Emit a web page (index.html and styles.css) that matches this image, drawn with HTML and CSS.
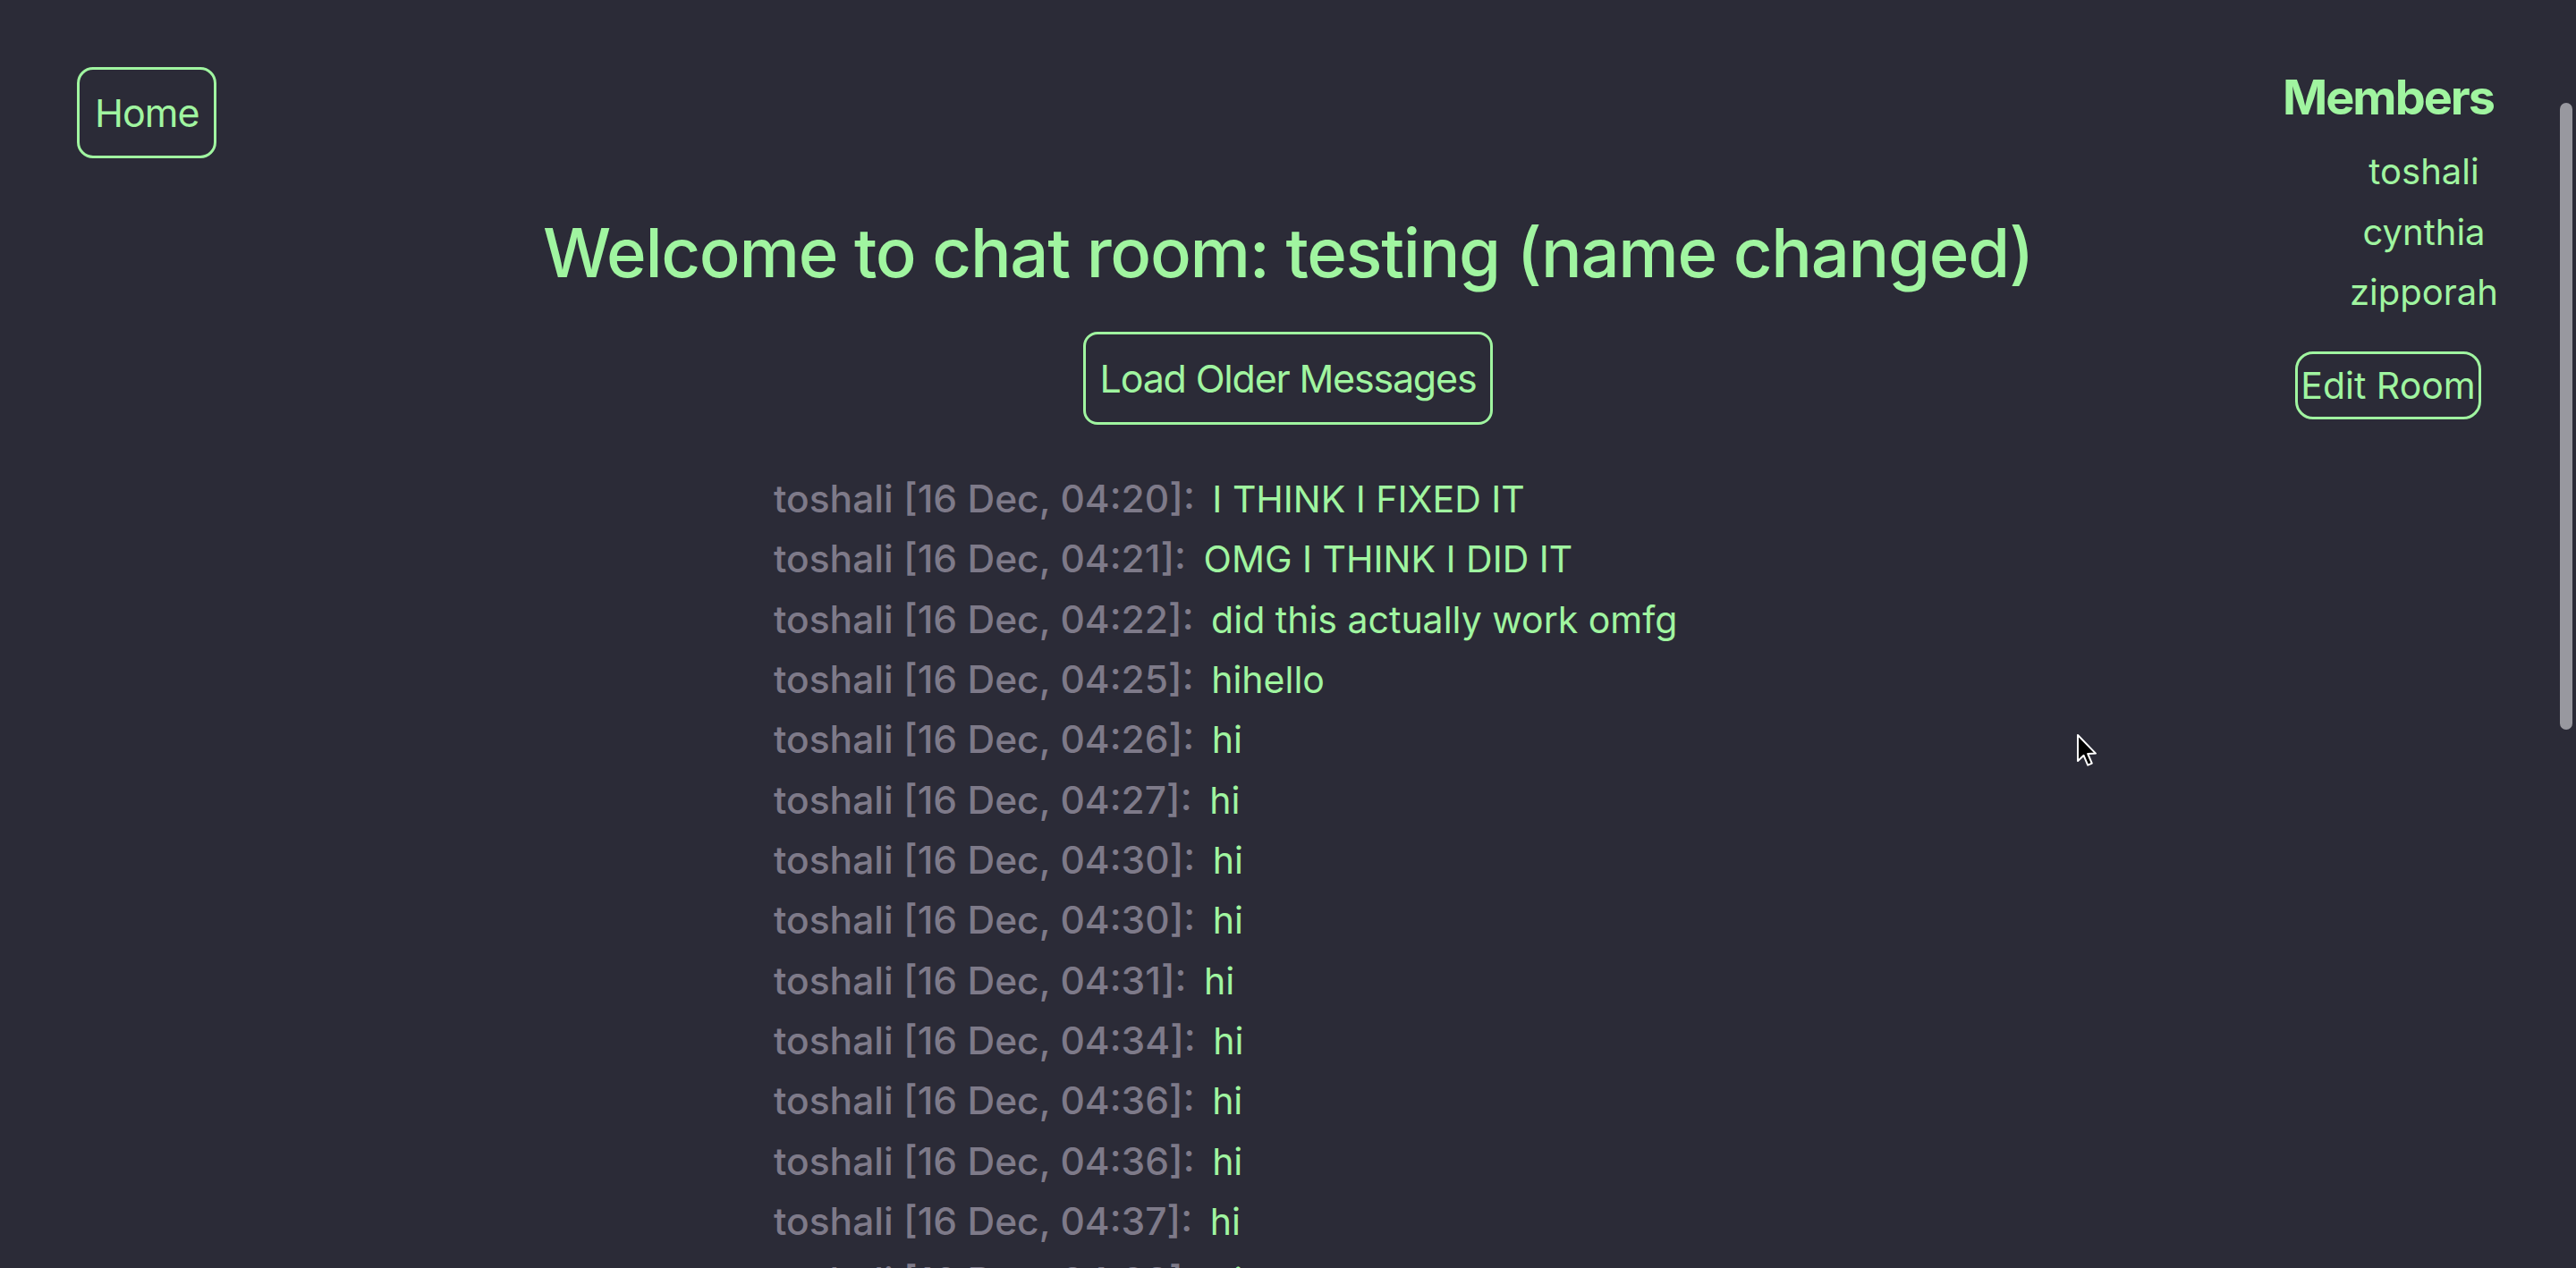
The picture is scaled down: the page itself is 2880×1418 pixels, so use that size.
FILE: index.html
```html
<!DOCTYPE html>
<html lang="en">
<head>
<meta charset="utf-8">
<title>Chat room</title>
<link rel="stylesheet" href="styles.css">
</head>
<body>
<div class="page">
  <div class="left-col">
    <button class="btn btn-home">Home</button>
  </div>
  <main class="center-col">
    <h1 class="title">Welcome to chat room: testing (name changed)</h1>
    <button class="btn btn-load">Load Older Messages</button>
    <div class="messages">
      <div class="msg"><span class="meta">toshali [16 Dec, 04:20]:</span> <span class="text">I THINK I FIXED IT</span></div>
      <div class="msg"><span class="meta">toshali [16 Dec, 04:21]:</span> <span class="text">OMG I THINK I DID IT</span></div>
      <div class="msg"><span class="meta">toshali [16 Dec, 04:22]:</span> <span class="text">did this actually work omfg</span></div>
      <div class="msg"><span class="meta">toshali [16 Dec, 04:25]:</span> <span class="text">hihello</span></div>
      <div class="msg"><span class="meta">toshali [16 Dec, 04:26]:</span> <span class="text">hi</span></div>
      <div class="msg"><span class="meta">toshali [16 Dec, 04:27]:</span> <span class="text">hi</span></div>
      <div class="msg"><span class="meta">toshali [16 Dec, 04:30]:</span> <span class="text">hi</span></div>
      <div class="msg"><span class="meta">toshali [16 Dec, 04:30]:</span> <span class="text">hi</span></div>
      <div class="msg"><span class="meta">toshali [16 Dec, 04:31]:</span> <span class="text">hi</span></div>
      <div class="msg"><span class="meta">toshali [16 Dec, 04:34]:</span> <span class="text">hi</span></div>
      <div class="msg"><span class="meta">toshali [16 Dec, 04:36]:</span> <span class="text">hi</span></div>
      <div class="msg"><span class="meta">toshali [16 Dec, 04:36]:</span> <span class="text">hi</span></div>
      <div class="msg"><span class="meta">toshali [16 Dec, 04:37]:</span> <span class="text">hi</span></div>
      <div class="msg"><span class="meta">toshali [16 Dec, 04:38]:</span> <span class="text">hi</span></div>
    </div>
  </main>
  <aside class="right-col">
    <h2 class="members-title">Members</h2>
    <ul class="members">
      <li>toshali</li>
      <li>cynthia</li>
      <li>zipporah</li>
    </ul>
    <button class="btn btn-edit">Edit Room</button>
  </aside>
</div>
<div class="scroll-thumb"></div>
<svg class="cursor" width="24" height="38" viewBox="0 0 12 19" aria-hidden="true">
  <path d="M1 1 L1 15.5 L4.3 12.4 L6.6 17.8 L8.9 16.8 L6.6 11.5 L11 11.3 Z" fill="#000" stroke="#fff" stroke-width="1" stroke-linejoin="round"/>
</svg>
</body>
</html>
```

FILE: styles.css
```css
html, body {
  margin: 0;
  padding: 0;
  height: 100%;
  overflow: hidden;
  background: #2b2b37;
}

body {
  font-family: Inter, "Liberation Sans", sans-serif;
  color: #a0f5a0;
}

.page {
  display: grid;
  grid-template-columns: 420px 1fr 420px;
  height: 100%;
}

.btn {
  font-family: Inter, "Liberation Sans", sans-serif;
  background: transparent;
  color: #a0f5a0;
  border: 3px solid #a0f5a0;
  cursor: pointer;
}

.left-col {
  padding: 75px 0 0 86px;
}

.btn-home {
  font-size: 43px;
  letter-spacing: -1px;
  height: 102px;
  padding: 0 17px;
  border-radius: 18px;
}

.center-col {
  display: flex;
  flex-direction: column;
  align-items: center;
  padding-top: 236px;
}

.title {
  margin: 0;
  font-size: 76px;
  font-weight: 500;
  letter-spacing: -1.3px;
  line-height: normal;
  white-space: nowrap;
}

.btn-load {
  margin-top: 43px;
  font-size: 43px;
  letter-spacing: -1.2px;
  height: 104px;
  padding: 0 16px;
  border-radius: 16px;
}

.messages {
  align-self: stretch;
  width: 1150px;
  margin: 49px auto 0;
}

.msg {
  height: 67.33px;
  font-size: 41px;
  line-height: 67.33px;
  white-space: nowrap;
}

.meta {
  color: #7e7a89;
  font-size: 42.5px;
  font-weight: 500;
  margin-right: 8px;
}

.text {
  color: #a0f5a0;
}

.right-col {
  display: flex;
  flex-direction: column;
  align-items: center;
  padding-top: 76px;
}

.members-title {
  margin: 0;
  font-size: 54px;
  font-weight: 700;
  letter-spacing: -2px;
  line-height: normal;
}

.members {
  margin: 17px 0 0;
  padding: 0 0 0 80px;
  list-style: none;
  text-align: center;
  font-size: 40px;
  line-height: 67.5px;
}

.btn-edit {
  margin-top: 32px;
  font-size: 41px;
  height: 76px;
  padding: 0 3px;
  border-radius: 20px;
}

.scroll-thumb {
  position: absolute;
  top: 115px;
  right: 4px;
  width: 14px;
  height: 701px;
  border-radius: 7px;
  background: #98989f;
}

.cursor {
  position: absolute;
  left: 2321px;
  top: 820px;
}
```
